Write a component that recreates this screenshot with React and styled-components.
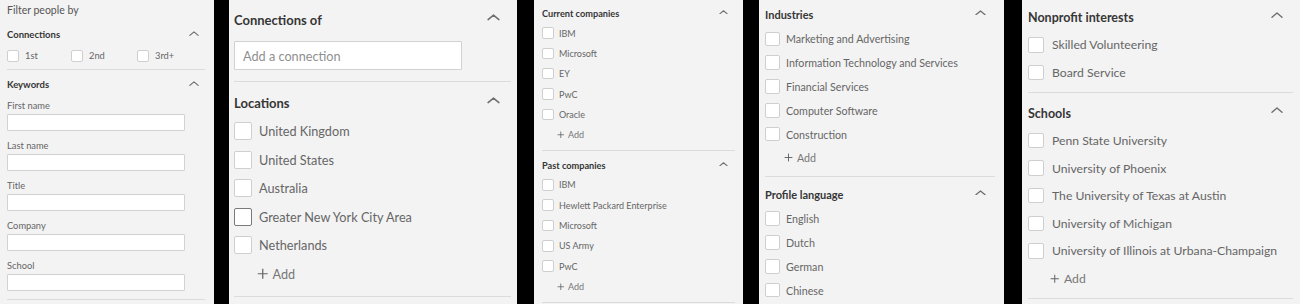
import React from 'react';
import styled, { createGlobalStyle, ThemeProvider } from 'styled-components';

const Global = createGlobalStyle`
  html, body { margin: 0; padding: 0; background: #000; }
  body { font-family: Lato, "Liberation Sans", sans-serif; }
  * { box-sizing: border-box; }
`;

const Page = styled.div`
  display: flex;
  width: 1300px;
  height: 304px;
  background: #000;
  overflow: hidden;
`;

const Panel = styled.section`
  flex: none;
  width: ${p => p.theme.width}px;
  height: 304px;
  margin-left: ${p => p.$gap || 0}px;
  padding: 0 ${p => p.theme.padR}px 0 ${p => p.theme.padL}px;
  background: #f3f3f3;
  color: #666;
  overflow: hidden;
`;

const PanelTitle = styled.div`
  padding-top: 2px;
  font-size: 10.5px;
  line-height: 16px;
  color: #555;
`;

const Section = styled.div`
  padding-top: ${p => p.$pt}px;
  padding-bottom: ${p => p.$pb}px;
  border-bottom: 1px solid #dcdcdc;
`;

const Header = styled.div`
  display: flex;
  align-items: center;
  justify-content: space-between;
  height: ${p => p.theme.headLH}px;
`;

const Heading = styled.h3`
  margin: 0;
  font-size: ${p => p.theme.head}px;
  line-height: ${p => p.theme.headLH}px;
  font-weight: 700;
  color: #363636;
  white-space: nowrap;
`;

const ChevronSvg = styled.svg`
  flex: none;
  width: ${p => p.theme.chevW}px;
  height: ${p => p.theme.chevW / 2}px;
  margin-right: ${p => p.theme.chevR}px;
  margin-bottom: ${p => p.theme.chevUp * 2}px;
`;

const Chevron = () => (
  <ChevronSvg viewBox="0 0 12 6">
    <polyline points="1,5.2 6,1 11,5.2" fill="none" stroke="#6e6e6e" strokeWidth="1.4" strokeLinecap="round" strokeLinejoin="round" />
  </ChevronSvg>
);

const OptionList = styled.ul`
  list-style: none;
  margin: ${p => p.theme.listTop}px 0 0;
  padding: 0;
`;

const Option = styled.li`
  display: flex;
  align-items: center;
  height: ${p => p.theme.row}px;
`;

const Box = styled.span`
  flex: none;
  width: ${p => p.theme.box}px;
  height: ${p => p.theme.box}px;
  margin-right: ${p => p.theme.gapBox}px;
  background: #fff;
  border: 1px solid ${p => (p.$hover ? '#7a7a7a' : '#cfcfcf')};
  border-radius: 2px;
`;

const Label = styled.span`
  font-size: ${p => p.theme.item}px;
  color: #666;
  white-space: nowrap;
`;

const AddRow = styled.li`
  display: flex;
  align-items: center;
  height: ${p => p.theme.row}px;
  padding-left: ${p => p.theme.box + p.theme.gapBox - 2}px;
  font-size: ${p => p.theme.item}px;
  color: #777;
`;

const PlusSvg = styled.svg`
  flex: none;
  width: ${p => p.theme.plus}px;
  height: ${p => p.theme.plus}px;
  margin-right: ${p => p.theme.plusGap}px;
`;

const Plus = () => (
  <PlusSvg viewBox="0 0 12 12">
    <path d="M6 0.8V11.2M0.8 6H11.2" stroke="#666" strokeWidth="1.3" fill="none" />
  </PlusSvg>
);

const TextInput = styled.input`
  display: block;
  width: ${p => p.theme.inputW}px;
  height: ${p => p.theme.inputH}px;
  margin: ${p => p.$mt || 0}px 0 0;
  padding: 0 8px;
  border: 1px solid #d2d2d2;
  border-radius: 1px;
  background: #fff;
  font-family: Lato, "Liberation Sans", sans-serif;
  font-size: ${p => p.theme.item}px;
  color: #333;
  outline: none;
  &::placeholder { color: #8f8f8f; }
`;

const DegreeRow = styled.div`
  display: grid;
  grid-template-columns: 64px 66px auto;
  align-items: center;
  height: 14px;
  margin-top: 6.5px;
`;

const Degree = styled.label`
  display: flex;
  align-items: center;
`;

const Fields = styled.div`
  margin-top: 7px;
`;

const Field = styled.div`
  & + & { margin-top: 8px; }
`;

const FieldLabel = styled.div`
  font-size: ${p => p.theme.item}px;
  line-height: 14px;
  color: #666;
`;

const FieldInput = styled(TextInput)`
  margin-top: 1px;
`;

const themes = {
  p1: { width: 214, padL: 7, padR: 9, head: 9.5, headLH: 14, item: 9.3, box: 12, gapBox: 6, chevW: 10, chevR: 6, chevUp: 2, inputW: 178, inputH: 17, listTop: 0, row: 14, plus: 8, plusGap: 3 },
  p2: { width: 288, padL: 5, padR: 6, head: 13, headLH: 20, item: 12.7, box: 18, gapBox: 7, chevW: 13, chevR: 11, chevUp: 2.5, inputW: 228, inputH: 29, listTop: 4, row: 28.5, plus: 11.5, plusGap: 4 },
  p3: { width: 209, padL: 8, padR: 8, head: 9.2, headLH: 14, item: 9, box: 11.5, gapBox: 5.5, chevW: 9, chevR: 7, chevUp: 2, listTop: 2, row: 20.3, plus: 7.5, plusGap: 3.5 },
  p4: { width: 245, padL: 6, padR: 9, head: 11, headLH: 16, item: 10.7, box: 14.5, gapBox: 6.5, chevW: 11, chevR: 9, chevUp: 2.5, listTop: 4, row: 23.8, plus: 9, plusGap: 4 },
  p5: { width: 278, padL: 6, padR: 7, head: 12.5, headLH: 18, item: 12.2, box: 15.5, gapBox: 8.5, chevW: 12, chevR: 10, chevUp: 3.5, listTop: 4, row: 27.6, plus: 9.5, plusGap: 4.5 },
};

const FilterGroup = ({ title, items, add, pt, pb, hovered }) => (
  <Section $pt={pt} $pb={pb}>
    <Header>
      <Heading>{title}</Heading>
      <Chevron />
    </Header>
    <OptionList>
      {items.map(it => (
        <Option key={it}>
          <Box $hover={it === hovered} />
          <Label>{it}</Label>
        </Option>
      ))}
      {add && (
        <AddRow>
          <Plus />
          Add
        </AddRow>
      )}
    </OptionList>
  </Section>
);

export default function App() {
  return (
    <>
      <Global />
      <Page>
        <ThemeProvider theme={themes.p1}>
          <Panel>
            <PanelTitle>Filter people by</PanelTitle>
            <Section $pt={10} $pb={6.5}>
              <Header>
                <Heading>Connections</Heading>
                <Chevron />
              </Header>
              <DegreeRow>
                {['1st', '2nd', '3rd+'].map(d => (
                  <Degree key={d}>
                    <Box />
                    <Label>{d}</Label>
                  </Degree>
                ))}
              </DegreeRow>
            </Section>
            <Section $pt={8} $pb={8}>
              <Header>
                <Heading>Keywords</Heading>
                <Chevron />
              </Header>
              <Fields>
                {['First name', 'Last name', 'Title', 'Company', 'School'].map(f => (
                  <Field key={f}>
                    <FieldLabel>{f}</FieldLabel>
                    <FieldInput type="text" />
                  </Field>
                ))}
              </Fields>
            </Section>
          </Panel>
        </ThemeProvider>

        <ThemeProvider theme={themes.p2}>
          <Panel $gap={15}>
            <Section $pt={10} $pb={11}>
              <Header>
                <Heading>Connections of</Heading>
                <Chevron />
              </Header>
              <TextInput $mt={11} type="text" placeholder="Add a connection" />
            </Section>
            <FilterGroup
              title="Locations"
              pt={11}
              pb={8}
              hovered="Greater New York City Area"
              items={['United Kingdom', 'United States', 'Australia', 'Greater New York City Area', 'Netherlands']}
              add
            />
          </Panel>
        </ThemeProvider>

        <ThemeProvider theme={themes.p3}>
          <Panel $gap={17}>
            <FilterGroup title="Current companies" pt={7} pb={5} items={['IBM', 'Microsoft', 'EY', 'PwC', 'Oracle']} add />
            <FilterGroup title="Past companies" pt={8} pb={5} items={['IBM', 'Hewlett Packard Enterprise', 'Microsoft', 'US Army', 'PwC']} add />
          </Panel>
        </ThemeProvider>

        <ThemeProvider theme={themes.p4}>
          <Panel $gap={16}>
            <FilterGroup
              title="Industries"
              pt={7}
              pb={6}
              items={['Marketing and Advertising', 'Information Technology and Services', 'Financial Services', 'Computer Software', 'Construction']}
              add
            />
            <FilterGroup title="Profile language" pt={10} pb={6} items={['English', 'Dutch', 'German', 'Chinese']} />
          </Panel>
        </ThemeProvider>

        <ThemeProvider theme={themes.p5}>
          <Panel $gap={18}>
            <FilterGroup title="Nonprofit interests" pt={9} pb={5.5} items={['Skilled Volunteering', 'Board Service']} />
            <FilterGroup
              title="Schools"
              pt={12}
              pb={5.5}
              items={['Penn State University', 'University of Phoenix', 'The University of Texas at Austin', 'University of Michigan', 'University of Illinois at Urbana-Champaign']}
              add
            />
          </Panel>
        </ThemeProvider>
      </Page>
    </>
  );
}
